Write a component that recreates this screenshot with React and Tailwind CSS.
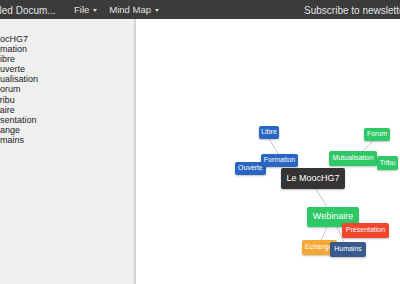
import React from "react";

const items = [
  { t: "Le MoocHG7", m: -25 },
  { t: "Formation", m: -13.5 },
  { t: "Libre", m: -5 },
  { t: "Ouverte", m: -7 },
  { t: "Mutualisation", m: -15 },
  { t: "Forum", m: -5.5 },
  { t: "Tribu", m: -5.5 },
  { t: "Webinaire", m: -25.5 },
  { t: "Présentation", m: -14 },
  { t: "Echange", m: -15.5 },
  { t: "Humains", m: -11.5 },
];

// page coords -> canvas coords (canvas origin at 136,19)
const OX = 136;
const OY = 19;

const nodes = [
  { t: "Ouverte", x: 235, y: 162, w: 31, h: 13, c: "bg-[#2866c2]", f: "text-[7px]" },
  { t: "Formation", x: 261, y: 154, w: 37, h: 13, c: "bg-[#2866c2]", f: "text-[7px]" },
  { t: "Libre", x: 259, y: 126, w: 20, h: 13, c: "bg-[#2866c2]", f: "text-[7px]" },
  { t: "Forum", x: 364, y: 128, w: 26, h: 13, c: "bg-[#2ec866]", f: "text-[7px]" },
  { t: "Mutualisation", x: 329, y: 151, w: 48, h: 15, c: "bg-[#2ec866]", f: "text-[7px]" },
  { t: "Tribu", x: 377, y: 156, w: 21, h: 14, c: "bg-[#2ec866]", f: "text-[7px]" },
  { t: "Le MoocHG7", x: 281, y: 168, w: 64, h: 21, c: "bg-[#353333]", f: "text-[9px]" },
  { t: "Webinaire", x: 307, y: 207, w: 52, h: 20, c: "bg-[#2ec866]", f: "text-[9px]" },
  { t: "Présentation", x: 342, y: 223, w: 47, h: 15, c: "bg-[#f2462f]", f: "text-[7px]" },
  { t: "Echange", x: 302, y: 240, w: 35, h: 15, c: "bg-[#f6a833]", f: "text-[7px]", align: "justify-start pl-[3px]" },
  { t: "Humains", x: 330, y: 242, w: 36, h: 15, c: "bg-[#385a8c]", f: "text-[7px]" },
];

const lines = [
  [269, 139, 279, 155],
  [363, 151, 373, 141],
  [316, 189, 327, 207],
  [327, 227, 321, 240],
  [337, 227, 344, 242],
];

function Caret() {
  return (
    <span className="ml-[4px] inline-block h-0 w-0 border-x-[2.5px] border-t-[3px] border-x-transparent border-t-[#dddddd] align-middle" />
  );
}

export default function App() {
  return (
    <div
      className="flex h-[284px] w-[400px] flex-col overflow-hidden bg-white"
      style={{ fontFamily: '"Liberation Sans", Arial, sans-serif' }}
    >
      <div className="flex h-[19px] shrink-0 items-center overflow-hidden bg-[#3b3b3b] pt-[1px] text-[9px] text-[#e2e2e2]">
        <span className="ml-[-21px] w-[95px] shrink-0 whitespace-nowrap text-[10px]">Untitled Docum...</span>
        <span className="flex shrink-0 items-center whitespace-nowrap text-[9.5px]">
          File
          <Caret />
        </span>
        <span className="ml-[12px] flex shrink-0 items-center whitespace-nowrap text-[9.5px]">
          Mind Map
          <Caret />
        </span>
        <span className="ml-auto mr-[-8px] shrink-0 whitespace-nowrap text-[10px]">Subscribe to newsletter</span>
      </div>
      <div className="flex min-h-0 flex-1">
        <div className="w-[136px] shrink-0 overflow-hidden border-r-[2px] border-[#d3d3d3] bg-[#efefef] pt-[15px]">
          {items.map((it) => (
            <div
              key={it.t}
              className="h-[10.1px] whitespace-nowrap text-[9px] leading-[10.1px] text-[#222222]"
              style={{ marginLeft: it.m }}
            >
              {it.t}
            </div>
          ))}
        </div>
        <div className="relative flex-1 overflow-hidden bg-white">
          <svg className="absolute inset-0 h-full w-full" viewBox="0 0 264 265">
            {lines.map((l, i) => (
              <line
                key={i}
                x1={l[0] - OX}
                y1={l[1] - OY}
                x2={l[2] - OX}
                y2={l[3] - OY}
                stroke="#c8c8c8"
                strokeWidth="1"
              />
            ))}
          </svg>
          {nodes.map((n) => (
            <div
              key={n.t}
              className={`absolute flex items-center ${n.align || "justify-center"} whitespace-nowrap rounded-[2px] text-white shadow-[0_1px_2px_rgba(0,0,0,0.25)] ${n.c} ${n.f}`}
              style={{ left: n.x - OX, top: n.y - OY, width: n.w, height: n.h }}
            >
              {n.t}
            </div>
          ))}
        </div>
      </div>
    </div>
  );
}
